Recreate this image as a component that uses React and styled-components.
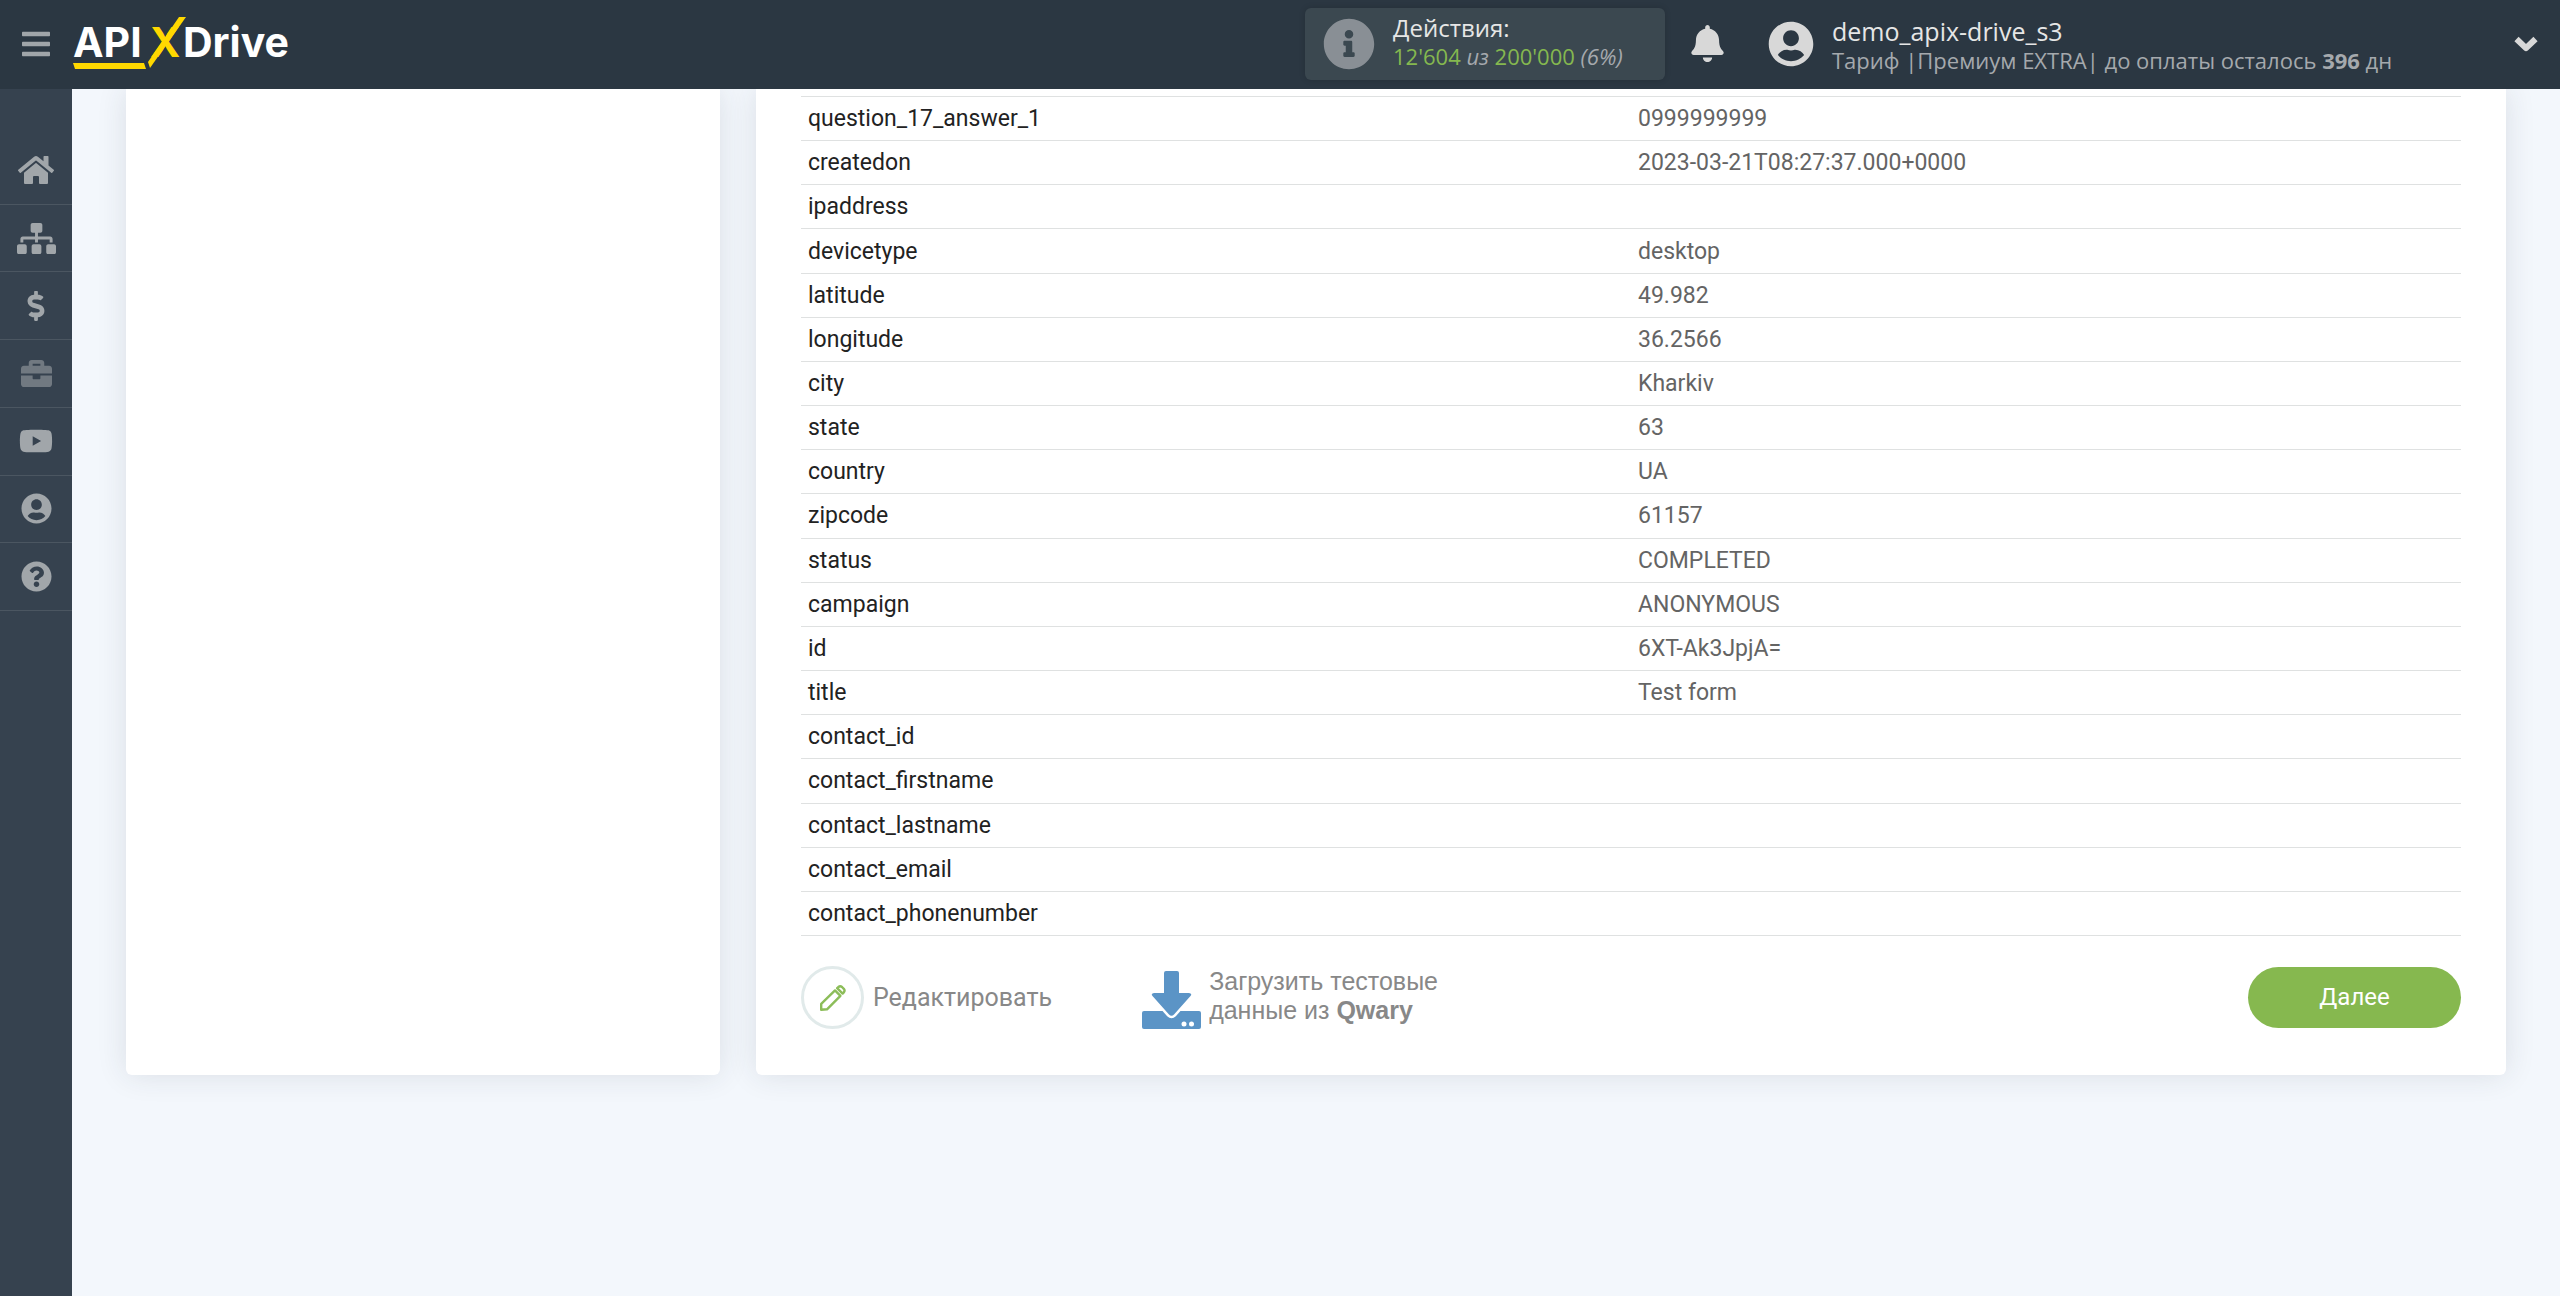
import React from 'react';
import styled, { createGlobalStyle } from 'styled-components';
import {
  FaBars,
  FaBell,
  FaBriefcase,
  FaDollarSign,
  FaHome,
  FaInfoCircle,
  FaQuestionCircle,
  FaSitemap,
  FaUserCircle,
  FaYoutube,
} from 'react-icons/fa';

const GlobalStyle = createGlobalStyle`
  * {
    box-sizing: border-box;
  }
  body {
    margin: 0;
    background: #f3f7fc;
    font-family: Roboto, sans-serif;
  }
  a {
    color: inherit;
    text-decoration: none;
  }
  button {
    padding: 0;
    border: none;
    background: none;
    font: inherit;
    color: inherit;
    cursor: pointer;
  }
  svg {
    display: block;
    flex-shrink: 0;
  }
`;

const Page = styled.div`
  min-height: 100vh;
  display: flex;
  flex-direction: column;
`;

const Header = styled.header`
  height: 89px;
  flex-shrink: 0;
  display: flex;
  align-items: center;
  padding: 0 22px 2px 20px;
  background: #2b3742;
  color: #d8d8d8;
  font-family: 'Open Sans', 'Noto Sans', sans-serif;
  position: relative;
  z-index: 1;
`;

const MenuButton = styled.button`
  color: #a0a5a9;
  margin-right: 21px;
`;

const LogoLink = styled.a`
  margin-right: auto;
`;

const Actions = styled.div`
  width: 360px;
  height: 72px;
  display: flex;
  align-items: center;
  gap: 18px;
  padding-left: 18px;
  border-radius: 6px;
  background: #3b4850;
  box-shadow: 0 0 6px rgba(0, 0, 0, 0.15);
  color: #898f95;
`;

const Lines = styled.div`
  display: flex;
  flex-direction: column;
  padding: ${({ $pad }) => $pad};
  text-align: left;
  white-space: nowrap;
`;

const Title = styled.span`
  font-size: ${({ $size }) => $size}px;
  line-height: 29px;
  color: #e6e6e6;
`;

const Small = styled.span`
  font-size: 22px;
  line-height: 29px;
  color: #a5a9ad;
`;

const Green = styled.span`
  color: #85b84f;
`;

const BellButton = styled.button`
  margin: 0 42px 0 24px;
`;

const UserButton = styled.button`
  width: 770px;
  display: flex;
  align-items: center;
  gap: 18px;
`;

const Body = styled.div`
  flex: 1;
  display: flex;
`;

const Sidebar = styled.aside`
  width: 72px;
  flex-shrink: 0;
  padding-top: 48px;
  background: #36424f;
`;

const Nav = styled.nav`
  height: 474px;
  display: flex;
  flex-direction: column;
`;

const NavLink = styled.a`
  flex: 1;
  display: flex;
  align-items: center;
  justify-content: center;
  border-bottom: 1px solid #4b5661;
  color: ${({ $dim }) => ($dim ? '#717981' : '#a1a6aa')};
`;

const Content = styled.main`
  flex: 1;
  display: grid;
  grid-template-columns: 297fr 875fr;
  gap: 36px;
  align-items: stretch;
  align-content: start;
  padding: 0 54px 54px;
`;

const Card = styled.section`
  padding: 7px 45px 46px;
  border-radius: 0 0 6px 6px;
  background: #fff;
  box-shadow: 0 0 30px rgba(40, 50, 65, 0.12);
`;

const Table = styled.table`
  width: 100%;
  height: 840px;
  table-layout: fixed;
  border-collapse: separate;
  border-spacing: 0;
  border-top: 1px solid #dfe1e1;
  font-size: 23px;
  line-height: 27px;
  color: #646464;
`;

const Name = styled.th`
  padding: 0 7px;
  border-bottom: 1px solid #dfe1e1;
  text-align: left;
  font-weight: 400;
  color: #222;
`;

const Value = styled.td`
  padding: 0 7px;
  border-bottom: 1px solid #dfe1e1;
`;

const Footer = styled.div`
  display: flex;
  align-items: center;
  padding-top: 30px;
  font-size: 25px;
  line-height: 29px;
  color: #888;
`;

const EditButton = styled.button`
  display: flex;
  align-items: center;
  gap: 9px;
  margin-right: 90px;
`;

const Circle = styled.span`
  width: 63px;
  height: 63px;
  display: flex;
  align-items: center;
  justify-content: center;
  border: 3px solid #e1eaea;
  border-radius: 50%;
`;

const LoadButton = styled.button`
  display: flex;
  align-items: flex-start;
  gap: 8px;
  font-family: 'Liberation Sans', Arial, sans-serif;
  font-size: 25px;
  line-height: 29px;
  text-align: left;

  svg {
    margin-top: 4px;
  }
`;

const NextButton = styled.button`
  width: 213px;
  height: 61px;
  margin-left: auto;
  border-radius: 31px;
  background: #86b84f;
  color: #fff;
  font-size: 24px;
`;

const Logo = () => (
  <svg width="222" height="56" viewBox="0 0 222 56" role="img" aria-label="APIXDrive">
    <g fontFamily="Inter, sans-serif" fontWeight="700" fontSize="41">
      <text x="0" y="41" fill="#fff">API</text>
      <text x="77" y="41" fill="#ffd800">X</text>
      <text x="110" y="41" fill="#fff">Drive</text>
    </g>
    <path d="M0 47h71l2 6H2z" fill="#ffd800" />
    <path d="M106 1h7L77 52l-2-6z" fill="#ffd800" />
  </svg>
);

const Chevron = styled.svg`
  margin-left: auto;
`;

const Pencil = () => (
  <svg width="28" height="28" viewBox="0 0 28 28" fill="none" stroke="#8cbd59" strokeWidth="2.4" strokeLinejoin="round">
    <path d="M2.200 25.800v-6L16 6.400l5.400 5.400L8 25.300z" />
    <path d="M18.200 4.200l1.200-1.200q1.800-1.500 3.600 0l1.800 1.800q1.500 1.800 0 3.600l-1.200 1.200z" />
  </svg>
);

const Download = () => (
  <svg width="59" height="58" viewBox="0 0 59 58" fill="#5b94c6">
    <path d="M2 40h55a2 2 0 0 1 2 2v14a2 2 0 0 1-2 2H2a2 2 0 0 1-2-2V42a2 2 0 0 1 2-2z" />
    <path
      d="M24 0h11a2 2 0 0 1 2 2v20h10q3.500.5 1.500 3L32 43.500q-2.500 2.500-5 0L10.500 25q-2-2.500 1.500-3h10V2a2 2 0 0 1 2-2z"
      stroke="#fff"
      strokeWidth="5"
      paintOrder="stroke"
    />
    <circle cx="42" cy="53" r="2.500" fill="#fff" />
    <circle cx="49.500" cy="53" r="2.500" fill="#fff" />
  </svg>
);

const links = [
  { label: 'Главная', icon: FaHome, size: 36 },
  { label: 'Связи', icon: FaSitemap, size: 39 },
  { label: 'Тарифы', icon: FaDollarSign, size: 30 },
  { label: 'Услуги', icon: FaBriefcase, size: 31, dim: true },
  { label: 'Видео', icon: FaYoutube, size: 34 },
  { label: 'Профиль', icon: FaUserCircle, size: 31 },
  { label: 'Помощь', icon: FaQuestionCircle, size: 31 },
];

const rows = [
  ['question_17_answer_1', '0999999999'],
  ['createdon', '2023-03-21T08:27:37.000+0000'],
  ['ipaddress', ''],
  ['devicetype', 'desktop'],
  ['latitude', '49.982'],
  ['longitude', '36.2566'],
  ['city', 'Kharkiv'],
  ['state', '63'],
  ['country', 'UA'],
  ['zipcode', '61157'],
  ['status', 'COMPLETED'],
  ['campaign', 'ANONYMOUS'],
  ['id', '6XT-Ak3JpjA='],
  ['title', 'Test form'],
  ['contact_id', ''],
  ['contact_firstname', ''],
  ['contact_lastname', ''],
  ['contact_email', ''],
  ['contact_phonenumber', ''],
];

const App = () => {
  return (
    <>
      <GlobalStyle />
      <Page>
        <Header>
          <MenuButton aria-label="Меню">
            <FaBars size={32} />
          </MenuButton>
          <LogoLink href="#">
            <Logo />
          </LogoLink>
          <Actions>
            <FaInfoCircle size={52} />
            <Lines $pad="0 0 4px">
              <Title $size={24}>Действия:</Title>
              <Small>
                <Green>12'604</Green> <i>из</i> <Green>200'000</Green> <i>(6%)</i>
              </Small>
            </Lines>
          </Actions>
          <BellButton aria-label="Уведомления">
            <FaBell size={37} />
          </BellButton>
          <UserButton>
            <FaUserCircle size={46} />
            <Lines $pad="4px 0 0">
              <Title $size={25}>demo_apix-drive_s3</Title>
              <Small>
                Тариф |Премиум EXTRA| до оплаты осталось <b>396</b> дн
              </Small>
            </Lines>
            <Chevron width="24" height="16" viewBox="0 0 24 16" fill="none" stroke="#d8d8d8" strokeWidth="6">
              <path d="M2.500 3L12 12.200 21.500 3" strokeLinejoin="round" />
            </Chevron>
          </UserButton>
        </Header>
        <Body>
          <Sidebar>
            <Nav>
              {links.map(({ label, icon: Icon, size, dim }) => (
                <NavLink key={label} href="#" aria-label={label} $dim={dim}>
                  <Icon size={size} />
                </NavLink>
              ))}
            </Nav>
          </Sidebar>
          <Content>
            <Card />
            <Card>
              <Table>
                <tbody>
                  {rows.map(([name, value]) => (
                    <tr key={name}>
                      <Name scope="row">{name}</Name>
                      <Value>{value}</Value>
                    </tr>
                  ))}
                </tbody>
              </Table>
              <Footer>
                <EditButton>
                  <Circle>
                    <Pencil />
                  </Circle>
                  Редактировать
                </EditButton>
                <LoadButton>
                  <Download />
                  <span>
                    Загрузить тестовые
                    <br />
                    данные из <b>Qwary</b>
                  </span>
                </LoadButton>
                <NextButton>Далее</NextButton>
              </Footer>
            </Card>
          </Content>
        </Body>
      </Page>
    </>
  );
};

export default App;
